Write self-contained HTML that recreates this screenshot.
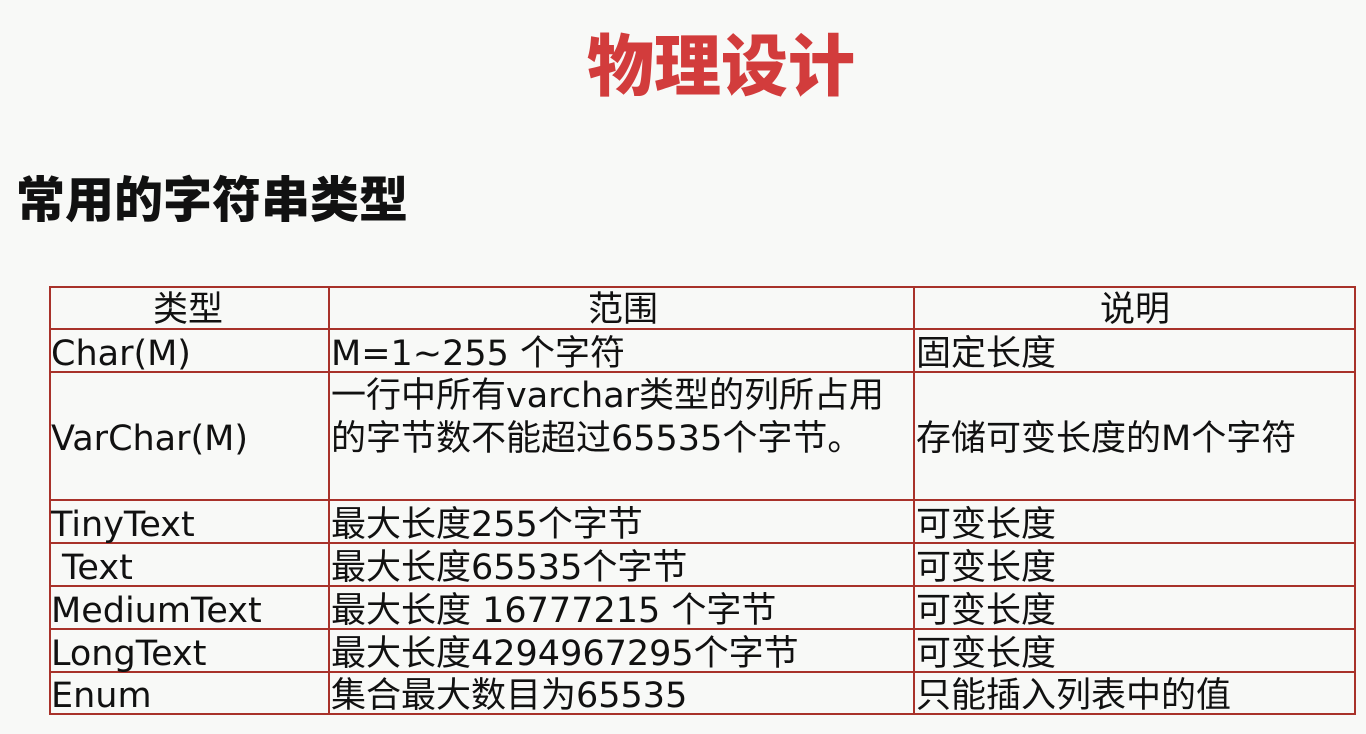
<!DOCTYPE html>
<html><head><meta charset="utf-8"><style>
body{margin:0;width:1366px;height:734px;background:#f8f9f7;position:relative;overflow:hidden;font-family:"Liberation Sans","Noto Sans CJK SC",sans-serif;}
.t{position:absolute;white-space:nowrap;line-height:1;}
.h{position:absolute;background:#a8322a;height:2px;left:49px;width:1307px;}
.v{position:absolute;background:#a8322a;width:2px;top:286px;height:429px;}
.c{position:absolute;font-size:35px;color:#111;white-space:nowrap;line-height:1;font-family:"DejaVu Sans","Noto Sans CJK SC",sans-serif;}
</style></head><body>
<div class="t" style="left:587px;top:28px;font-size:67px;font-weight:900;color:#d23c3c;font-family:'Noto Sans CJK SC',sans-serif;">物理设计</div>
<div class="t" style="left:16px;top:172px;font-size:49px;font-weight:900;color:#111;font-family:'Noto Sans CJK SC',sans-serif;">常用的字符串类型</div>
<div class="h" style="top:286px"></div>
<div class="h" style="top:328px"></div>
<div class="h" style="top:371px"></div>
<div class="h" style="top:499px"></div>
<div class="h" style="top:542px"></div>
<div class="h" style="top:585px"></div>
<div class="h" style="top:628px"></div>
<div class="h" style="top:671px"></div>
<div class="h" style="top:713px"></div>
<div class="v" style="left:49px"></div>
<div class="v" style="left:328px"></div>
<div class="v" style="left:913px"></div>
<div class="v" style="left:1354px"></div>
<div class="c" style="left:153px;top:293px">类型</div>
<div class="c" style="left:588px;top:293px">范围</div>
<div class="c" style="left:1100px;top:293px">说明</div>
<div class="c" style="left:51px;top:337px">Char(M)</div>
<div class="c" style="left:331px;top:337px">M=1~255 个字符</div>
<div class="c" style="left:916px;top:337px">固定长度</div>
<div class="c" style="left:51px;top:422px">VarChar(M)</div>
<div class="c" style="left:331px;top:379px">一行中所有varchar类型的列所占用</div>
<div class="c" style="left:331px;top:422px">的字节数不能超过65535个字节。</div>
<div class="c" style="left:916px;top:422px">存储可变长度的M个字符</div>
<div class="c" style="left:51px;top:508px">TinyText</div>
<div class="c" style="left:331px;top:508px">最大长度255个字节</div>
<div class="c" style="left:916px;top:508px">可变长度</div>
<div class="c" style="left:62px;top:551px">Text</div>
<div class="c" style="left:331px;top:551px">最大长度65535个字节</div>
<div class="c" style="left:916px;top:551px">可变长度</div>
<div class="c" style="left:51px;top:594px">MediumText</div>
<div class="c" style="left:331px;top:594px">最大长度 16777215 个字节</div>
<div class="c" style="left:916px;top:594px">可变长度</div>
<div class="c" style="left:51px;top:637px">LongText</div>
<div class="c" style="left:331px;top:637px">最大长度4294967295个字节</div>
<div class="c" style="left:916px;top:637px">可变长度</div>
<div class="c" style="left:51px;top:679px">Enum</div>
<div class="c" style="left:331px;top:679px">集合最大数目为65535</div>
<div class="c" style="left:916px;top:679px">只能插入列表中的值</div>
</body></html>
